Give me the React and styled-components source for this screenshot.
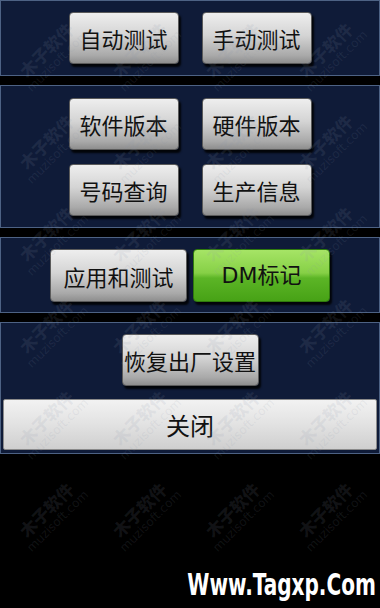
import React from "react";
import styled, { createGlobalStyle } from "styled-components";

const Global = createGlobalStyle`
  html, body {
    margin: 0;
    padding: 0;
    background: #000000;
  }
  #root {
    width: 380px;
    height: 608px;
  }
`;

const Screen = styled.div`
  position: relative;
  width: 380px;
  height: 608px;
  overflow: hidden;
  background: #000000;
  display: flex;
  flex-direction: column;
  gap: 9px;
  font-family: "Noto Sans CJK SC", "DejaVu Sans", sans-serif;
`;

const Panel = styled.div`
  background: #0f1b38;
  border: 1px solid #4d6284;
  display: flex;
  flex-direction: column;
  align-items: center;
  gap: ${(p) => p.$gap || 14}px;
  padding: ${(p) => p.$pad || "11px 0"};
`;

const Row = styled.div`
  display: flex;
  justify-content: center;
  gap: ${(p) => p.$gap || 23}px;
`;

const Button = styled.button`
  width: ${(p) => p.$w || 110}px;
  height: ${(p) => p.$h || 52}px;
  padding: 0;
  border: 1px solid #5a5a5a;
  border-radius: 4px;
  background: linear-gradient(#eeeeee 0%, #d4d4d4 45%, #a9a9a9 85%, #8e8e8e 100%);
  box-shadow: 2px 3px 2px rgba(0, 0, 0, 0.85);
  color: #111111;
  font-family: "Noto Sans CJK SC", "DejaVu Sans", sans-serif;
  font-size: ${(p) => p.$fs || 22}px;
  line-height: 1;
  white-space: nowrap;
  display: flex;
  align-items: center;
  justify-content: center;
`;

const GreenButton = styled(Button)`
  border-color: #2f7a0c;
  background: linear-gradient(#a6e466 0%, #86d046 45%, #5cb526 55%, #47a216 100%);
  font-family: "DejaVu Sans", "Noto Sans CJK SC", sans-serif;
`;

const CloseButton = styled(Button)`
  width: 374px;
  height: 51px;
  border-radius: 2px;
  border-color: #8a8a8a;
  background: linear-gradient(#f2f2f2 0%, #e2e2e2 50%, #cfcfcf 100%);
  box-shadow: none;
  font-size: 24px;
`;

const Watermarks = styled.div`
  position: absolute;
  top: 8px;
  left: 4px;
  pointer-events: none;
  display: grid;
  grid-template-columns: repeat(4, 93px);
  grid-auto-rows: 92px;
`;

const Mark = styled.div`
  transform: rotate(-45deg);
  display: flex;
  flex-direction: column;
  align-items: center;
  justify-content: center;
  color: rgba(140, 150, 170, 0.13);
  line-height: 1;
  .zh {
    font-family: "Noto Sans CJK SC", sans-serif;
    font-size: 17px;
    font-weight: 900;
  }
  .en {
    font-family: "DejaVu Sans", sans-serif;
    font-size: 12px;
    margin-top: 2px;
  }
`;

const Brand = styled.div`
  position: absolute;
  right: 4px;
  bottom: 8px;
  color: #ffffff;
  font-family: "DejaVu Sans Condensed", "Liberation Sans", sans-serif;
  font-weight: 700;
  font-size: 31px;
  line-height: 1;
  transform: scaleX(0.72);
  transform-origin: right center;
`;

export default function App() {
  const marks = Array.from({ length: 24 });
  return (
    <Screen>
      <Global />
      <Panel $pad="11px 0">
        <Row>
          <Button>自动测试</Button>
          <Button>手动测试</Button>
        </Row>
      </Panel>
      <Panel $pad="12px 0 11px">
        <Row>
          <Button>软件版本</Button>
          <Button>硬件版本</Button>
        </Row>
        <Row>
          <Button>号码查询</Button>
          <Button>生产信息</Button>
        </Row>
      </Panel>
      <Panel $pad="11px 0 10px">
        <Row $gap={6}>
          <Button $w={137} $h={53}>应用和测试</Button>
          <GreenButton $w={137} $h={53}>DM标记</GreenButton>
        </Row>
      </Panel>
      <Panel $pad="11px 0 3px" $gap={13}>
        <Button $w={137} $h={52}>恢复出厂设置</Button>
        <CloseButton>关闭</CloseButton>
      </Panel>
      <Watermarks>
        {marks.map((_, i) => (
          <Mark key={i}>
            <span className="zh">木子软件</span>
            <span className="en">muzisoft.com</span>
          </Mark>
        ))}
      </Watermarks>
      <Brand>Www.Tagxp.Com</Brand>
    </Screen>
  );
}
